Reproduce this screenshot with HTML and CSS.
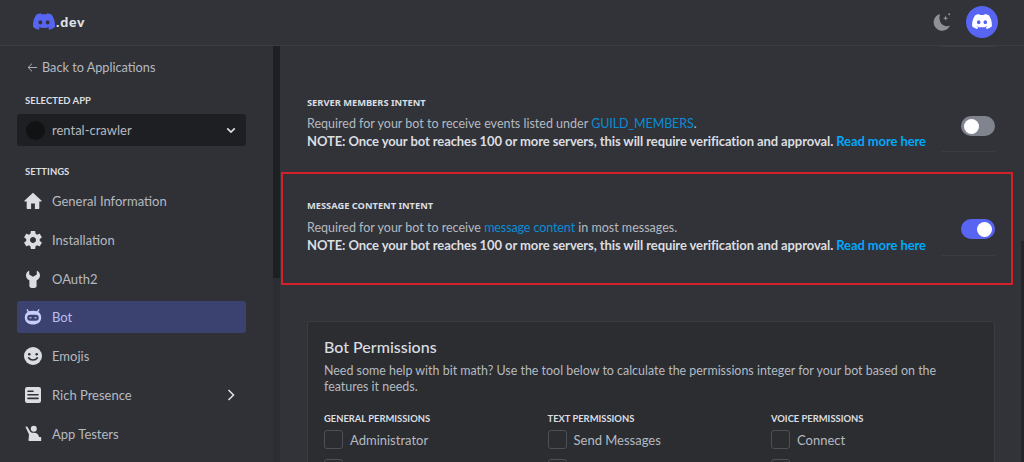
FILE: index.html
```html
<!DOCTYPE html>
<html lang="en">
<head>
<meta charset="utf-8">
<title>Discord Developer Portal</title>
<link rel="stylesheet" href="styles.css">
</head>
<body>
<svg class="defs" width="0" height="0" aria-hidden="true"><defs><symbol id="discord" viewBox="0 0 127.14 96.36"><path d="M107.7,8.07A105.15,105.15,0,0,0,81.47,0a72.06,72.06,0,0,0-3.36,6.83A97.68,97.68,0,0,0,49,6.83,72.37,72.37,0,0,0,45.64,0,105.89,105.89,0,0,0,19.39,8.09C2.79,32.65-1.71,56.6.54,80.21h0A105.73,105.73,0,0,0,32.71,96.36,77.7,77.7,0,0,0,39.6,85.25a68.42,68.42,0,0,1-10.85-5.18c.91-.66,1.8-1.34,2.66-2a75.57,75.57,0,0,0,64.32,0c.87.71,1.76,1.39,2.66,2a68.68,68.68,0,0,1-10.87,5.19,77,77,0,0,0,6.89,11.1A105.25,105.25,0,0,0,126.6,80.22h0C129.24,52.84,122.09,29.11,107.7,8.07ZM42.45,65.69C36.18,65.69,31,60,31,53s5-12.74,11.43-12.74S54,46,53.89,53,48.84,65.69,42.45,65.69Zm42.24,0C78.41,65.69,73.25,60,73.25,53s5-12.74,11.44-12.74S96.23,46,96.12,53,91.08,65.69,84.69,65.69Z"/></symbol></defs></svg>
<header class="topbar">
  <div class="brand">
    <svg class="brand-logo"><use href="#discord"/></svg>
    <span class="brand-text">.dev</span>
  </div>
  <div class="top-actions">
    <svg class="moon" viewBox="0 0 18 18"><path d="M7 1A8.500 8.500 0 1 0 17 12.500C11 15 4.500 10 7 1Z"/><path d="M12.600 2.600l.7 1.900 1.900.7-1.900.7-.7 1.900-.7-1.900-1.900-.7 1.900-.7Z"/><circle cx="16.200" cy="1.300" r="1"/></svg>
    <div class="avatar"><svg class="avatar-logo"><use href="#discord"/></svg></div>
  </div>
</header>
<div class="body-wrap">
  <aside class="sidebar">
    <nav class="side-inner">
      <a class="back"><svg class="back-arrow" viewBox="0 0 12 12"><path d="M11 6H1.500M5.500 1.800 1.200 6l4.300 4.200"/></svg>Back to Applications</a>
      <div class="side-label selected-label">SELECTED APP</div>
      <div class="app-select">
        <span class="app-dot"></span>
        <span class="app-name">rental-crawler</span>
        <svg class="chev" viewBox="0 0 12 8"><path d="M1.500 1.500 6 6l4.500-4.500"/></svg>
      </div>
      <div class="side-label settings-label">SETTINGS</div>
      <ul class="nav">
        <li class="nav-item"><svg class="nav-icon" viewBox="0 0 18 18"><path d="M9 .8.600 8.400c-.4.4-.2 1 .4 1H2.700V16.200c0 .5.300.800.800.800H7.100V11.500h3.800V17h3.600c.5 0 .8-.3.800-.8V9.400H17c.6 0 .8-.6.400-1Z"/></svg><span>General Information</span></li>
        <li class="nav-item"><svg class="nav-icon" viewBox="2.400 2.400 19.200 19.200"><path d="M19.140 12.940c.04-.3.06-.61.06-.94 0-.32-.02-.64-.07-.94l2.030-1.580c.18-.14.23-.41.12-.61l-1.920-3.320c-.12-.22-.37-.29-.59-.22l-2.390.96c-.5-.38-1.030-.7-1.620-.94l-.36-2.540c-.04-.24-.24-.41-.48-.41h-3.840c-.24 0-.43.17-.47.41l-.36 2.540c-.59.24-1.130.57-1.620.94l-2.390-.96c-.22-.08-.47 0-.59.22L2.740 8.870c-.12.21-.08.47.12.61l2.030 1.580c-.05.3-.09.63-.09.94s.02.64.07.94l-2.030 1.580c-.18.14-.23.41-.12.61l1.920 3.320c.12.22.37.29.59.22l2.390-.96c.5.38 1.030.7 1.620.94l.36 2.540c.05.24.24.41.48.41h3.840c.24 0 .44-.17.47-.41l.36-2.540c.59-.24 1.130-.56 1.620-.94l2.390.96c.22.08.47 0 .59-.22l1.920-3.320c.12-.22.07-.47-.12-.61l-2.010-1.580zM12 15.200c-1.760 0-3.200-1.440-3.200-3.200s1.440-3.200 3.200-3.200 3.200 1.440 3.200 3.200-1.440 3.200-3.200 3.200z"/></svg><span>Installation</span></li>
        <li class="nav-item"><svg class="nav-icon" viewBox="0 0 18 18"><path d="M5.200.4C3.200 1.400 2 3.200 2 5.300c0 2.300 1.300 4.100 3.400 5v5.900c0 1 1.300 1.800 3.600 1.800s3.600-.8 3.600-1.800v-5.900c2.100-.9 3.400-2.700 3.400-5 0-2.100-1.200-3.900-3.200-4.900v4.200L9 6.800 5.200 4.600Z"/></svg><span>OAuth2</span></li>
        <li class="nav-item active"><svg class="nav-icon" viewBox="0 0 18 18"><path d="M3.400 1 5 3.300C6.200 2.900 7.600 2.700 9 2.700s2.800.2 4 .6L14.600 1l1 .7-1.300 2.300c1.900 1.300 2.900 3.100 2.900 5.400 0 4.600-3.600 7-8.200 7S.8 14 .8 9.400c0-2.300 1-4.100 2.900-5.400L2.400 1.700Z"/><rect class="visor" x="3.200" y="6.800" width="11.600" height="6" rx="3"/><path class="eye" d="M5.400 9.800h2.200M10.400 9.800h2.200"/></svg><span>Bot</span></li>
        <li class="nav-item"><svg class="nav-icon" viewBox="0 0 18 18"><circle cx="9" cy="9" r="9"/><circle class="cut" cx="5.300" cy="7.200" r="1.300"/><circle class="cut" cx="12.700" cy="7.200" r="1.300"/><path class="smile" d="M4.600 10.800c2 3 6.800 3 8.800 0"/></svg><span>Emojis</span></li>
        <li class="nav-item"><svg class="nav-icon" viewBox="0 0 18 18"><rect x="1" y="1" width="16" height="16" rx="2.200"/><path class="smile" d="M4 5.300h5M4 8.800h10M4 12.400h10"/></svg><span>Rich Presence</span><svg class="nav-caret" viewBox="0 0 8 12"><path d="M1.500 1 6.500 6l-5 5"/></svg></li>
        <li class="nav-item"><svg class="nav-icon" viewBox="0 0 18 18"><circle cx="9.800" cy="3.800" r="3"/><path d="M1.300 1.600l2 .1 3.200 5.200c.9.600 2.200.900 3.500.900 2.500 0 4.500 1.400 5 4.200h1.600c.3 0 .6.300.6.600v2.800c0 .3-.3.600-.6.600H5.300c-.6 0-.9-.3-.8-.9l.5-5.700Z"/></svg><span>App Testers</span></li>
      </ul>
    </nav>
    <div class="side-scroll"><div class="side-thumb"></div></div>
  </aside>
  <main class="main">
    <div class="content">
      <div class="sep-only"><span class="sep-line"></span></div>
      <section class="intent first">
        <div class="intent-text">
          <h3 class="intent-title">SERVER MEMBERS INTENT</h3>
          <p class="intent-desc">Required for your bot to receive events listed under <a class="link">GUILD_MEMBERS</a>.</p>
          <p class="intent-note">NOTE: Once your bot reaches 100 or more servers, this will require verification and approval. <a class="link-strong">Read more here</a></p>
        </div>
        <div class="intent-side"><span class="toggle"><span class="knob"></span></span></div>
      </section>
      <section class="intent second">
        <div class="intent-text">
          <h3 class="intent-title">MESSAGE CONTENT INTENT</h3>
          <p class="intent-desc">Required for your bot to receive <a class="link">message content</a> in most messages.</p>
          <p class="intent-note">NOTE: Once your bot reaches 100 or more servers, this will require verification and approval. <a class="link-strong">Read more here</a></p>
        </div>
        <div class="intent-side"><span class="toggle on"><span class="knob"></span></span></div>
      </section>
      <section class="perm-card">
        <h2 class="perm-title">Bot Permissions</h2>
        <p class="perm-desc">Need some help with bit math? Use the tool below to calculate the permissions integer for your bot based on the features it needs.</p>
        <div class="perm-grid">
          <div class="perm-col">
            <h4 class="perm-head">GENERAL PERMISSIONS</h4>
            <label class="perm-row"><span class="box"></span>Administrator</label>
            <span class="box"></span>
          </div>
          <div class="perm-col">
            <h4 class="perm-head">TEXT PERMISSIONS</h4>
            <label class="perm-row"><span class="box"></span>Send Messages</label>
            <span class="box"></span>
          </div>
          <div class="perm-col">
            <h4 class="perm-head">VOICE PERMISSIONS</h4>
            <label class="perm-row"><span class="box"></span>Connect</label>
            <span class="box"></span>
          </div>
        </div>
      </section>
    </div>
    <div class="main-thumb"></div>
    <div class="highlight"></div>
  </main>
</div>
</body>
</html>
```
FILE: styles.css
```css
* { box-sizing: border-box; }
html, body { height: 100%; }
body {
  margin: 0;
  height: 462px;
  overflow: hidden;
  background: #313338;
  color: #b5bac1;
  font-family: "Lato", "Liberation Sans", sans-serif;
  display: flex;
  flex-direction: column;
}
.defs { position: absolute; }
h2, h3, h4, p, ul { margin: 0; padding: 0; }
ul { list-style: none; }

.topbar {
  height: 46px;
  flex: none;
  display: flex;
  align-items: center;
  justify-content: space-between;
  padding: 0 26px 2px 33px;
  background: #313338;
  border-bottom: 1px solid #3b3d42;
}
.brand { display: flex; align-items: center; gap: 1px; }
.brand-logo { width: 22px; height: 17px; fill: #5865f2; }
.brand-text { color: #dfe1e5; font-size: 14px; font-weight: 900; letter-spacing: .8px; line-height: 17px; }
.top-actions { display: flex; align-items: center; gap: 15px; }
.moon { width: 18px; height: 18px; fill: #8e9196; }
.avatar {
  width: 32px; height: 32px; border-radius: 50%;
  background: #5865f2;
  display: flex; align-items: center; justify-content: center;
}
.avatar-logo { width: 20px; height: 15px; fill: #fff; }

.body-wrap { flex: 1; min-height: 0; display: flex; }
.sidebar { width: 280px; flex: none; display: flex; background: #2f3136; }
.side-inner { width: 273px; padding: 0 27px 0 17px; }
.side-scroll { width: 7px; background: #2b2d31; }
.side-thumb { height: 232px; background: #1e1f22; }

.back {
  display: flex; align-items: center;
  height: 20px; margin: 11px 0 0 10px;
  font-size: 12.700px; color: #b5bac1;
}
.back-arrow { width: 11px; height: 11px; margin-right: 4px; fill: none; stroke: #b5bac1; stroke-width: 1; }
.side-label { font-size: 9.500px; font-weight: 700; color: #dbdee1; padding-left: 8px; line-height: 12px; }
.selected-label { margin-top: 18px; }
.settings-label { margin-top: 20px; }
.app-select {
  height: 32px; margin-top: 7px;
  background: #1e1f22; border-radius: 3px;
  display: flex; align-items: center;
  padding: 0 10px 0 9px;
}
.app-dot { width: 19px; height: 19px; border-radius: 50%; background: #111214; }
.app-name { margin-left: 7px; flex: 1; font-size: 13px; color: #b5bac1; }
.chev { width: 10px; height: 7px; fill: none; stroke: #dbdee1; stroke-width: 2; }

.nav { margin-top: 7px; display: flex; flex-direction: column; gap: 6.800px; }
.nav-item {
  height: 32px; border-radius: 3px;
  display: flex; align-items: center;
  padding: 0 11px 0 7px;
  font-size: 13px; color: #b5bac1;
}
.nav-item span { flex: 1; margin-left: 10px; }
.nav-icon { width: 18px; height: 18px; flex: none; fill: #dbdee1; }
.nav-item.active { background: #3c4270; color: #b9bdf0; }
.nav-item.active .nav-icon { fill: #c9cdfb; }
.visor { fill: #3c4270; }
.eye { fill: none; stroke: #c9cdfb; stroke-width: 1; }
.cut { fill: #2f3136; }
.smile { fill: none; stroke: #2f3136; stroke-width: 1.600; stroke-linecap: round; }
.nav-caret { width: 8px; height: 12px; fill: none; stroke: #dbdee1; stroke-width: 1.600; }

.main { flex: 1; position: relative; overflow: hidden; }
.content { padding: 0 29px 0 27px; }
.sep-only { display: flex; justify-content: flex-end; }
.sep-line { width: 53px; border-bottom: 1px solid #3b3d42; height: 1px; }

.intent { display: flex; justify-content: space-between; }
.intent.first { padding-top: 50px; }
.intent.second { padding-top: 48px; }
.intent-text { flex: 1; padding-bottom: 3px; }
.intent-title { font-family: "Noto Sans", "Liberation Sans", sans-serif; font-size: 9.300px; font-weight: 700; color: #dbdee1; line-height: 12px; }
.intent-desc { margin-top: 7px; font-size: 12.500px; line-height: 16.500px; color: #b5bac1; }
.second .intent-desc { margin-top: 8px; }
.intent-note { font-size: 13px; line-height: 16.500px; font-weight: 700; color: #dbdee1; white-space: nowrap; letter-spacing: -.09px; }
.link { color: #0a8dd6; letter-spacing: -.1px; }
.link-strong { color: #00a8fc; }
.intent-side {
  width: 53px; flex: none;
  display: flex; align-items: flex-start; justify-content: flex-end;
  padding-top: 19px;
  border-bottom: 1px solid #3b3d42;
}
.toggle {
  width: 34px; height: 20px; border-radius: 10px;
  background: #80848e;
  display: flex; align-items: center; padding: 0 3px;
}
.toggle.on { background: #5865f2; justify-content: flex-end; }
.knob { width: 15px; height: 15px; border-radius: 50%; background: #fff; }

.perm-card {
  margin-top: 65px;
  height: 160px;
  background: #2b2d31;
  border: 1px solid #3a3c41;
  border-radius: 3px;
  padding: 15px 16px;
}
.perm-title { font-size: 16px; font-weight: 500; color: #dbdee1; line-height: 20px; }
.perm-desc { margin-top: 6px; font-size: 12.450px; line-height: 16px; color: #b5bac1; width: 640px; }
.perm-grid { margin-top: 18px; display: grid; grid-template-columns: repeat(3, 223.500px); }
.perm-col { display: flex; flex-direction: column; }
.perm-head { font-size: 9.400px; font-weight: 700; color: #dbdee1; line-height: 12px; }
.perm-row { display: flex; align-items: center; gap: 7px; margin: 5px 0 10px; font-size: 13px; color: #b5bac1; }
.box { display: block; width: 19px; height: 19px; border: 1px solid #4e5058; border-radius: 3px; flex: none; }

.main-thumb { position: absolute; right: 0; top: 195px; width: 3px; height: 222px; background: #232428; }
.highlight {
  position: absolute; left: 1px; top: 126px;
  width: 732px; height: 113px;
  border: 2px solid #d3202a;
  pointer-events: none;
}
```
